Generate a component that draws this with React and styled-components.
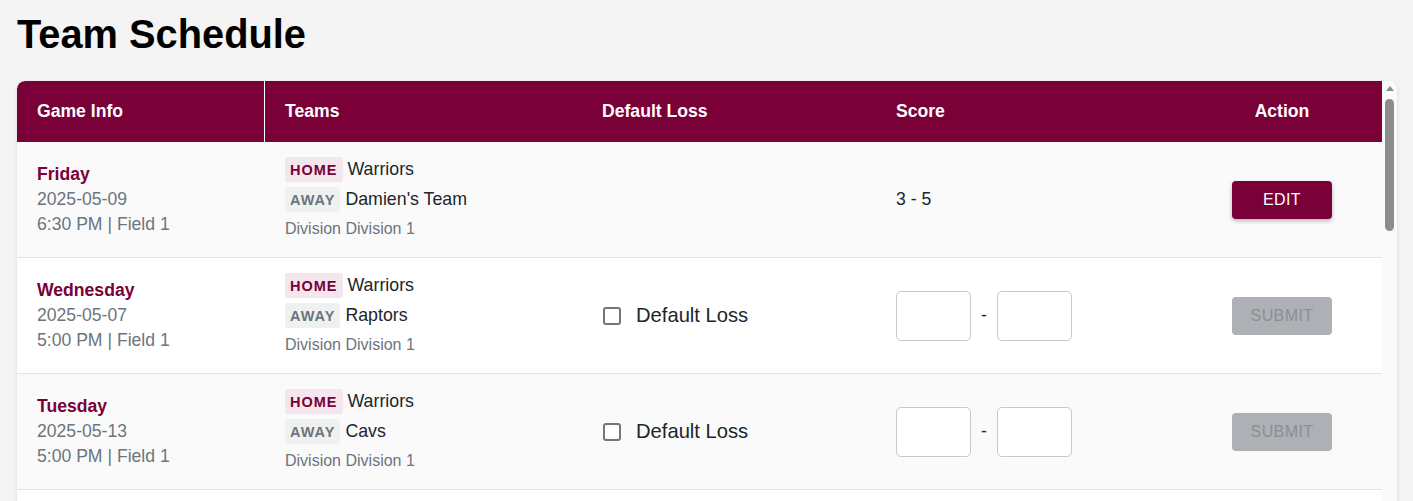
import React from "react";
import styled, { createGlobalStyle } from "styled-components";

const GlobalStyle = createGlobalStyle`
  html, body { margin: 0; padding: 0; overflow: hidden; }
  body {
    background: #f4f4f4;
    font-family: "Liberation Sans", Arial, Helvetica, sans-serif;
    color: #212529;
  }
`;

const MAROON = "#7a0038";
const COLS = "248px 317px 294px 306px 200px";

const Page = styled.div`
  padding: 11px 16px 0 17px;
`;

const Title = styled.h1`
  margin: 0 0 24px 0;
  font-size: 39.8px;
  line-height: 46px;
  font-weight: 700;
  color: #000;
`;

const TableBox = styled.div`
  display: flex;
  height: 480px;
  overflow: hidden;
  background: #fff;
  border-radius: 8px 8px 0 0;
  box-shadow: 0 1px 4px rgba(0, 0, 0, 0.12);
`;

const ScrollArea = styled.div`
  flex: 1;
  min-width: 0;
  overflow-y: auto;
  scrollbar-width: none;
  &::-webkit-scrollbar {
    display: none;
  }
`;

const Rail = styled.div`
  flex: 0 0 15px;
  display: flex;
  flex-direction: column;
  align-items: center;
  background: #fafafa;
`;

const RailArrow = styled.div`
  height: 15px;
  width: 15px;
  display: flex;
  align-items: center;
  justify-content: center;
  &::before {
    content: "";
    width: 0;
    height: 0;
    border-left: 4.5px solid transparent;
    border-right: 4.5px solid transparent;
    border-bottom: 5px solid #8c8c8c;
  }
`;

const RailThumb = styled.div`
  margin-top: 3px;
  width: 9px;
  height: 132px;
  border-radius: 5px;
  background: #8c8c8c;
`;

const HeadRow = styled.div`
  display: grid;
  grid-template-columns: ${COLS};
  height: 61px;
  background: ${MAROON};
  color: #fff;
  border-radius: 8px 0 0 0;
`;

const HeadCell = styled.div`
  display: flex;
  align-items: center;
  justify-content: ${(p) => (p.$center ? "center" : "flex-start")};
  padding: 0 20px;
  font-size: 17.6px;
  font-weight: 700;
  border-right: ${(p) => (p.$divider ? "1px solid #fff" : "none")};
`;

const Row = styled.div`
  display: grid;
  grid-template-columns: ${COLS};
  min-height: 115px;
  border-bottom: 1px solid #e3e3e3;
  background: ${(p) => (p.$alt ? "#fafafa" : "#fff")};
`;

const Cell = styled.div`
  display: flex;
  align-items: center;
  justify-content: ${(p) => (p.$center ? "center" : "flex-start")};
  padding: 0 20px;
  border-right: ${(p) => (p.$divider ? "1px solid transparent" : "none")};
`;

const InfoBlock = styled.div`
  display: flex;
  flex-direction: column;
  font-size: 17.6px;
  line-height: 25px;
`;

const Day = styled.div`
  color: ${MAROON};
  font-weight: 700;
`;

const Muted = styled.div`
  color: #6c757d;
`;

const TeamsBlock = styled.div`
  display: flex;
  flex-direction: column;
  gap: 5px;
  padding-bottom: 3px;
`;

const TeamLine = styled.div`
  display: flex;
  align-items: center;
  gap: 5px;
  font-size: 17.8px;
  color: #212529;
`;

const Badge = styled.span`
  display: inline-flex;
  align-items: center;
  height: 25px;
  padding: 0 5px;
  border-radius: 3px;
  font-size: 14.5px;
  font-weight: 700;
  letter-spacing: 1px;
  background: ${(p) => (p.$home ? "#f3e6ec" : "#eff1f1")};
  color: ${(p) => (p.$home ? MAROON : "#6c757d")};
`;

const Division = styled.div`
  margin-top: 1px;
  font-size: 16px;
  line-height: 21px;
  color: #6c757d;
`;

const CheckLabel = styled.label`
  display: flex;
  align-items: center;
  gap: 15px;
  font-size: 20.2px;
  color: #212529;
  cursor: pointer;
  margin-left: 1px;
`;

const CheckBox = styled.span`
  width: 18px;
  height: 18px;
  box-sizing: border-box;
  border: 2px solid #767676;
  border-radius: 3px;
  background: #fff;
`;

const ScoreText = styled.div`
  font-size: 17.6px;
  color: #212529;
`;

const ScoreInputs = styled.div`
  display: flex;
  align-items: center;
  gap: 10px;
  font-size: 17.6px;
  color: #212529;
`;

const ScoreInput = styled.input`
  width: 75px;
  height: 50px;
  box-sizing: border-box;
  border: 1px solid #c8c8c8;
  border-radius: 5px;
  background: #fff;
  font-size: 18px;
  text-align: center;
  outline: none;
`;

const ActionButton = styled.button`
  width: 100px;
  height: 38px;
  border: none;
  border-radius: 4px;
  font-family: inherit;
  font-size: 16px;
  letter-spacing: 0.4px;
  text-transform: uppercase;
  background: ${(p) => (p.disabled ? "#adb1b5" : MAROON)};
  color: ${(p) => (p.disabled ? "#8a8f94" : "#fff")};
  box-shadow: ${(p) => (p.disabled ? "none" : "0 2px 4px rgba(0,0,0,0.28)")};
  cursor: ${(p) => (p.disabled ? "default" : "pointer")};
`;

const games = [
  { day: "Friday", date: "2025-05-09", time: "6:30 PM", field: "Field 1", away: "Damien's Team", score: "3 - 5" },
  { day: "Wednesday", date: "2025-05-07", time: "5:00 PM", field: "Field 1", away: "Raptors" },
  { day: "Tuesday", date: "2025-05-13", time: "5:00 PM", field: "Field 1", away: "Cavs" },
  { day: "Thursday", date: "2025-05-15", time: "6:30 PM", field: "Field 2", away: "Hawks" },
  { day: "Monday", date: "2025-05-19", time: "5:00 PM", field: "Field 1", away: "Titans" },
  { day: "Wednesday", date: "2025-05-21", time: "6:30 PM", field: "Field 2", away: "Blazers" },
  { day: "Friday", date: "2025-05-23", time: "5:00 PM", field: "Field 1", away: "Storm" },
  { day: "Tuesday", date: "2025-05-27", time: "6:30 PM", field: "Field 1", away: "Eagles" },
  { day: "Thursday", date: "2025-05-29", time: "5:00 PM", field: "Field 2", away: "Lions" },
  { day: "Monday", date: "2025-06-02", time: "6:30 PM", field: "Field 1", away: "Sharks" },
  { day: "Wednesday", date: "2025-06-04", time: "5:00 PM", field: "Field 1", away: "Wolves" },
  { day: "Friday", date: "2025-06-06", time: "6:30 PM", field: "Field 2", away: "Falcons" },
  { day: "Tuesday", date: "2025-06-10", time: "5:00 PM", field: "Field 1", away: "Bulls" },
];

export default function App() {
  return (
    <>
      <GlobalStyle />
      <Page>
        <Title>Team Schedule</Title>
        <TableBox>
          <ScrollArea>
            <HeadRow>
              <HeadCell $divider>Game Info</HeadCell>
              <HeadCell>Teams</HeadCell>
              <HeadCell>Default Loss</HeadCell>
              <HeadCell>Score</HeadCell>
              <HeadCell $center>Action</HeadCell>
            </HeadRow>
            {games.map((g, i) => (
              <Row key={i} $alt={i % 2 === 0}>
                <Cell $divider>
                  <InfoBlock>
                    <Day>{g.day}</Day>
                    <Muted>{g.date}</Muted>
                    <Muted>
                      {g.time} | {g.field}
                    </Muted>
                  </InfoBlock>
                </Cell>
                <Cell>
                  <TeamsBlock>
                    <TeamLine>
                      <Badge $home>HOME</Badge>
                      Warriors
                    </TeamLine>
                    <TeamLine>
                      <Badge>AWAY</Badge>
                      {g.away}
                    </TeamLine>
                    <Division>Division Division 1</Division>
                  </TeamsBlock>
                </Cell>
                <Cell>
                  {!g.score && (
                    <CheckLabel>
                      <CheckBox />
                      Default Loss
                    </CheckLabel>
                  )}
                </Cell>
                <Cell>
                  {g.score ? (
                    <ScoreText>{g.score}</ScoreText>
                  ) : (
                    <ScoreInputs>
                      <ScoreInput type="text" aria-label="home score" />
                      -
                      <ScoreInput type="text" aria-label="away score" />
                    </ScoreInputs>
                  )}
                </Cell>
                <Cell $center>
                  {g.score ? (
                    <ActionButton>Edit</ActionButton>
                  ) : (
                    <ActionButton disabled>Submit</ActionButton>
                  )}
                </Cell>
              </Row>
            ))}
          </ScrollArea>
          <Rail aria-hidden="true">
            <RailArrow />
            <RailThumb />
          </Rail>
        </TableBox>
      </Page>
    </>
  );
}
